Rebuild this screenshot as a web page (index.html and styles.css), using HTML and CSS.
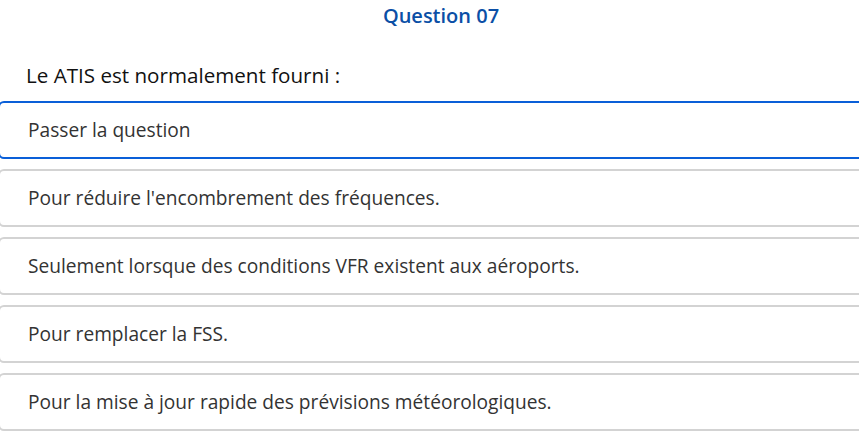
FILE: index.html
```html
<!DOCTYPE html>
<html lang="fr">
<head>
<meta charset="utf-8">
<link rel="stylesheet" href="styles.css">
</head>
<body>
<div class="page">
  <h1 class="title">Question 07</h1>
  <p class="prompt">Le ATIS est normalement fourni :</p>
  <ul class="answers">
    <li class="answer skip">Passer la question</li>
    <li class="answer">Pour réduire l'encombrement des fréquences.</li>
    <li class="answer">Seulement lorsque des conditions VFR existent aux aéroports.</li>
    <li class="answer">Pour remplacer la FSS.</li>
    <li class="answer">Pour la mise à jour rapide des prévisions météorologiques.</li>
  </ul>
</div>
</body>
</html>
```
FILE: styles.css
```css
html, body {
  margin: 0;
  padding: 0;
  background: #ffffff;
  overflow: hidden;
}
.page {
  font-family: "Open Sans", "Liberation Sans", sans-serif;
  color: #333333;
}
.title {
  margin: 0;
  padding-top: 3px;
  height: 26px;
  line-height: 26px;
  text-align: center;
  font-size: 20px;
  font-weight: 600;
  color: #0b4fa6;
  padding-left: 23px;
}
.prompt {
  margin: 0;
  margin-top: 33px;
  padding-left: 26px;
  font-size: 20.6px;
  line-height: 26px;
  color: #111111;
  height: 39px;
}
.answers {
  list-style: none;
  margin: 0 0 0 -2px;
  padding: 0;
  width: 880px;
  display: flex;
  flex-direction: column;
  gap: 10px;
}
.answer {
  box-sizing: border-box;
  height: 58px;
  border: 2px solid #d3d3d3;
  border-radius: 6px;
  padding-left: 28px;
  display: flex;
  align-items: center;
  font-size: 19.15px;
  color: #333333;
}
.answer.skip {
  border-color: #0a5fd8;
}
```
